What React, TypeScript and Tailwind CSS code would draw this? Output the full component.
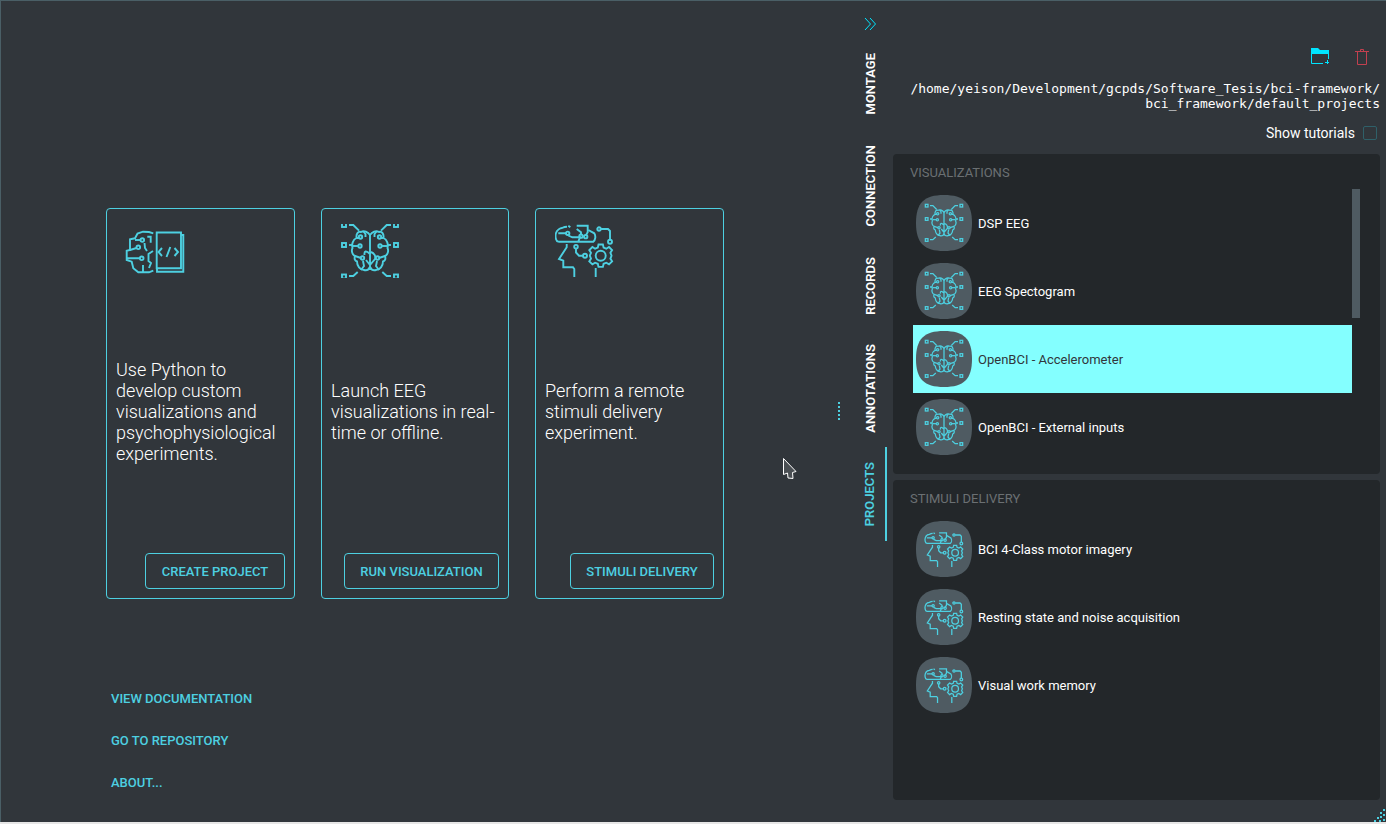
import React from "react";

const ACCENT = "#4dd0e1";

// brain with circuit lines and pads (used on the 2nd card and the visualization rows)
const brainHalf = (
  <>
    <path d="M30 12 C28 9 24 7 21 9 C18 8 16 11 16.5 15 C13 16.5 11.5 21 12.5 25 C11 28 12.5 32 15 33 C14 36 15 38 17 38.5 C17 43 20 47 24 47 C27 48 29 46 30 44" />
    <circle cx="20.5" cy="14" r="1.7" />
    <path d="M19 15 L16.5 15 M23.5 8.5 L25.5 11 L25.5 14" />
    <circle cx="20" cy="23" r="1.7" />
    <path d="M18.3 23 L13 23" />
    <circle cx="22.5" cy="35" r="1.7" />
    <path d="M21 35 L15 33 M23 38 L24 43 L21 47" />
    <rect x="2" y="0" width="4" height="4" />
    <path d="M9 2 H13.3 L19 7.7" />
    <rect x="2" y="20" width="4" height="4" />
    <path d="M9 22 H12" />
    <rect x="2" y="51.5" width="4" height="4" />
    <path d="M9 53 H13.3 L17.7 49" />
  </>
);

const BrainPads = () => (
  <g fill="none" stroke={ACCENT} strokeWidth="1.9">
    {brainHalf}
    <g transform="matrix(-1 0 0 1 60 0)">{brainHalf}</g>
    <path d="M30 11.5 V47 M30 31 C26 27 24 28 24.5 32 M30 42 L35 36 C36 33 34 30 31 29 M30 42 L26 37" />
  </g>
);

const HeadGear = () => (
  <g fill="none" stroke={ACCENT} strokeWidth="1.9">
    <path d="M3.3 18.7 C0.5 18 0 13 1 10 C2 7 5 5 7 5 C9 4 11 3.7 12 3.7 M3.3 18.7 H38.3 C40.5 17 41 13 39.3 10.3 L33.3 7" />
    <circle cx="12.7" cy="10.3" r="1.7" />
    <path d="M3.3 10.3 H11 M13.3 2.7 L15.3 4.3 M13.3 12.5 L17.3 14.3 H25 L23.3 18.7" />
    <path d="M21.7 2.7 H32.7 V9.3 L31 12 M21.7 6 L26 9.3 V11.5" />
    <circle cx="30.7" cy="13.7" r="1.7" />
    <circle cx="26" cy="13.2" r="1.7" />
    <circle cx="44" cy="6" r="1.7" />
    <path d="M46 6 H53 L55 8 V16.5" />
    <circle cx="55" cy="18.7" r="2" />
    <circle cx="21" cy="23.7" r="1.8" />
    <path d="M21 25.5 V29.5 L24 32.7 H28" />
    <circle cx="30" cy="32.7" r="2" />
    <path d="M11.7 21 V24.3 L4 36 L8.3 37.7 V44.3 H18 L19.3 46 V54 M40.7 45 V54" />
    <circle cx="45.7" cy="32.7" r="5" />
    <path d="M43.5 21.5 H47.9 L48.6 24.6 L51.3 25.7 L54 24 L57.1 27.1 L55.4 29.8 L56.5 32.5 V32.9 L55.4 35.6 L57.1 38.3 L54 41.4 L51.3 39.7 L48.6 40.8 L47.9 43.9 H43.5 L42.8 40.8 L40.1 39.7 L37.4 41.4 L34.3 38.3 L36 35.6 L34.9 32.9 V32.5 L36 29.8 L34.3 27.1 L37.4 24 L40.1 25.7 L42.8 24.6 Z" />
  </g>
);

const BrainCode = () => (
  <g fill="none" stroke={ACCENT} strokeWidth="1.9">
    <path d="M28.3 3.3 L24 2 L18 1.7 L12.5 3.5 L10 8.3 L5 9.3 V20 L1.7 20.8 V30 L6.7 31.7 L8.3 38.3 L13.3 42.3 H24 L28.3 40.7" />
    <circle cx="17.3" cy="10" r="1.8" />
    <path d="M15.5 10 H10" />
    <circle cx="13.3" cy="17.3" r="1.8" />
    <path d="M11.5 18 L5 20" />
    <circle cx="16.7" cy="28.3" r="1.8" />
    <path d="M15 28.3 H2 M22.3 6.7 H25.7 V12.7 M19.5 13 L20 18 L22 21 M28 21 L23.5 24 V31 L26 33 L24 38 M18 35 V42" />
    <path d="M31.7 2.5 H56 V38.3 H31.7 Z" />
    <path d="M56 5 H58.3 V41.7 H32 V39" />
    <path d="M37 18 L33.5 22 L37 26 M49.5 18 L53 22 L49.5 26 M45.3 17 L41.5 27" />
  </g>
);

const Squircle = ({ children, viewBox }: { children: React.ReactNode; viewBox: string }) => (
  <svg width="56" height="56" viewBox="0 0 56 56" className="shrink-0">
    <path d="M28 0 C48 0 56 8 56 28 S48 56 28 56 S0 48 0 28 S8 0 28 0 Z" fill="#4f5b62" />
    <svg x="8" y="8" width="40" height="40" viewBox={viewBox}>
      {children}
    </svg>
  </svg>
);

const cards = [
  {
    icon: <BrainCode />,
    box: "0 0 60 44",
    size: "w-[60px] h-[44px] mt-[6px]",
    text: ["Use Python to", "develop custom", "visualizations and", "psychophysiological", "experiments."],
    action: "CREATE PROJECT",
    width: "w-[189px]",
    iconPad: "pl-[18px]",
    btn: "w-[140px]",
  },
  {
    icon: <BrainPads />,
    box: "0 1 60 54",
    size: "w-[60px] h-[54px]",
    text: ["Launch EEG", "visualizations in real-", "time or offline."],
    action: "RUN VISUALIZATION",
    width: "w-[188px]",
    iconPad: "pl-[18px]",
    btn: "w-[155px]",
  },
  {
    icon: <HeadGear />,
    box: "0 1 60 54",
    size: "w-[60px] h-[54px]",
    text: ["Perform a remote", "stimuli delivery", "experiment."],
    action: "STIMULI DELIVERY",
    width: "w-[189px]",
    iconPad: "pl-[19px]",
    btn: "w-[144px]",
  },
];

const tabs = [
  { label: "MONTAGE", h: "h-[93px]" },
  { label: "CONNECTION", h: "h-[112px]" },
  { label: "RECORDS", h: "h-[87px]" },
  { label: "ANNOTATIONS", h: "h-[118px]" },
  { label: "PROJECTS", h: "h-[94px]" },
];

const visualizations = ["DSP EEG", "EEG Spectogram", "OpenBCI - Accelerometer", "OpenBCI - External inputs"];
const stimuli = ["BCI 4-Class motor imagery", "Resting state and noise acquisition", "Visual work memory"];

const Row = ({ label, active, stim }: { label: string; active?: boolean; stim?: boolean }) => (
  <div
    className={`flex h-[68px] w-[439px] items-center gap-[6px] pl-[3px] text-[13px] ${
      active ? "bg-[#84ffff] text-[#31363b]" : "text-white"
    }`}
  >
    {stim ? (
      <Squircle viewBox="-1 -3 60 60">
        <HeadGear />
      </Squircle>
    ) : (
      <Squircle viewBox="0 -2 60 60">
        <BrainPads />
      </Squircle>
    )}
    <span className="pt-px">{label}</span>
  </div>
);

export default function App() {
  return (
    <div className="h-screen overflow-hidden bg-[#e6e6e6] pb-[2px]">
      <div className="relative flex h-full border-l border-t border-[#4a5f66] bg-[#31363b] [font-family:Roboto,sans-serif]">
        {/* Left side */}
        <main className="w-[826px] shrink-0 pl-[105px] pt-[207px]">
          <div className="flex gap-[26px]">
            {cards.map((c) => (
              <div
                key={c.action}
                className={`flex h-[391px] flex-col rounded-[4px] border border-[#4dd0e1] ${c.width}`}
              >
                <div className={`h-[70px] pt-[15px] ${c.iconPad}`}>
                  <svg viewBox={c.box} className={c.size}>
                    {c.icon}
                  </svg>
                </div>
                <div className="mb-[9px] flex flex-1 flex-col justify-center pl-[9px] text-[18px] font-light leading-[21px] text-white">
                  {c.text.map((t) => (
                    <div key={t}>{t}</div>
                  ))}
                </div>
                <div className="flex justify-end pb-[9px] pr-[9px]">
                  <button
                    className={`h-[36px] rounded-[4px] border border-[#4dd0e1] pt-px text-[13px] font-medium text-[#4dd0e1] ${c.btn}`}
                  >
                    {c.action}
                  </button>
                </div>
              </div>
            ))}
          </div>

          <div className="mt-[79px] flex flex-col pl-[5px] text-[13px] font-medium text-[#4dd0e1]">
            <a className="flex h-[42px] items-center">VIEW DOCUMENTATION</a>
            <a className="flex h-[42px] items-center">GO TO REPOSITORY</a>
            <a className="flex h-[42px] items-center">ABOUT...</a>
          </div>
        </main>

        {/* Splitter */}
        <div className="flex w-[24px] shrink-0 flex-col items-center justify-center gap-[2px] pb-[2px]">
          {[0, 1, 2, 3, 4].map((i) => (
            <div key={i} className="h-[2px] w-[2px] bg-[#4dd0e1]" />
          ))}
        </div>

        {/* Tabs */}
        <div className="ml-[6px] w-[30px] shrink-0">
          <div className="flex h-[36px] items-center pl-[7px] pt-[9px]">
            <svg width="13" height="14" viewBox="0 0 13 14" fill="none" stroke="#00e5ff" strokeWidth="1">
              <path d="M1 1 L6.5 7 L1 13 M6 1 L11.5 7 L6 13" />
            </svg>
          </div>
          {tabs.map((t) => (
            <div
              key={t.label}
              className={`flex w-[30px] items-center justify-center pr-[3px] text-[13px] font-semibold ${t.h} ${
                t.label === "PROJECTS" ? "border-r-2 border-[#4dd0e1] text-[#4dd0e1]" : "text-white"
              }`}
            >
              <span className="rotate-180 leading-[15px] [writing-mode:vertical-rl]">{t.label}</span>
            </div>
          ))}
        </div>

        {/* Right side */}
        <aside className="ml-[6px] flex w-[487px] shrink-0 flex-col">
          <div className="flex h-[64px] items-end justify-end gap-[26px] pr-[11px]">
            <svg width="18" height="17" viewBox="0 0 18 17" fill="none" stroke="#00e5ff" strokeWidth="1">
              <path d="M0 0 H7 L9 2 H18 V6 H0 Z" fill="#00e5ff" stroke="none" />
              <path d="M0.5 5 V15.5 H12 M17.5 5 V11" />
              <path d="M14 14.5 H18 M16.5 12 V16" />
            </svg>
            <svg width="14" height="17" viewBox="0 0 14 17" fill="none" stroke="#c2404f" strokeWidth="1">
              <path d="M0 3.5 H14 M5.5 3 V1.5 H8.5 V3 M2.5 3.5 V16.5 H11.5 V3.5" />
            </svg>
          </div>
          <div className="mt-[16px] text-right text-[13px] leading-[15px] text-white [font-family:'DejaVu_Sans_Mono',monospace]">
            <div>/home/yeison/Development/gcpds/Software_Tesis/bci-framework/</div>
            <div>bci_framework/default_projects</div>
          </div>
          <div className="mt-[10px] flex h-[24px] items-center justify-end gap-[8px] pr-[3px] text-[14px] text-white">
            <span>Show tutorials</span>
            <span className="h-[14px] w-[14px] rounded-[2px] border border-[#2f6069]" />
          </div>
          <section className="mt-[9px] flex h-[320px] flex-col rounded-[4px] bg-[#23272a]">
            <div className="flex h-[35px] items-center pl-[17px] pt-[2px] text-[13px] text-[#6b7073]">VISUALIZATIONS</div>
            <div className="flex pl-[20px]">
              <div>
                {visualizations.map((v) => (
                  <Row key={v} label={v} active={v === "OpenBCI - Accelerometer"} />
                ))}
              </div>
              <div className="h-[129px] w-[8px] bg-[#4f5b62]" />
            </div>
          </section>
          <section className="mt-[6px] flex h-[320px] flex-col rounded-[4px] bg-[#23272a]">
            <div className="flex h-[35px] items-center pl-[17px] pt-[2px] text-[13px] text-[#6b7073]">STIMULI DELIVERY</div>
            <div className="pl-[20px]">
              {stimuli.map((s) => (
                <Row key={s} label={s} stim />
              ))}
            </div>
          </section>
        </aside>

        {/* Mouse pointer */}
        <svg width="14" height="23" viewBox="0 0 14 23" className="absolute left-[782px] top-[457px]">
          <path d="M0.5 0.5 L13 13.5 L9.5 14.5 L10 20.5 L5 20 L4.5 15 L0.5 16.5 Z" fill="#4a4f53" stroke="#ffffff" strokeWidth="1" />
        </svg>

        {/* Resize grip */}
        <svg width="12" height="13" viewBox="0 0 12 13" className="absolute bottom-0 right-0" fill="#4dd0e1">
          <rect x="9" y="0" width="2" height="2" />
          <rect x="6" y="3" width="2" height="2" />
          <rect x="9" y="5" width="2" height="2" />
          <rect x="3" y="8" width="2" height="2" />
          <rect x="6" y="7" width="2" height="2" />
          <rect x="9" y="10" width="2" height="2" />
          <rect x="0" y="11" width="2" height="2" />
          <rect x="5" y="11" width="2" height="2" />
        </svg>
      </div>
    </div>
  );
}
